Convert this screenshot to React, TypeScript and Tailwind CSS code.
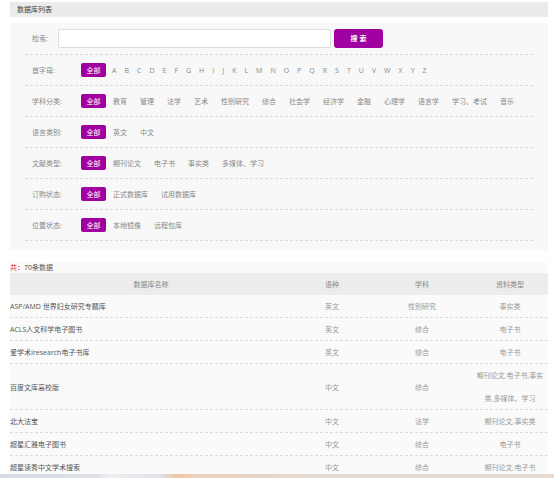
const letters = 'ABCDEFGHIJKLMNOPQRSTUVWXYZ'.split('');

const filters: { label: string; items: string[]; letters?: boolean }[] = [
  { label: '首字母:', items: letters, letters: true },
  {
    label: '学科分类:',
    items: ['教育', '管理', '法学', '艺术', '性别研究', '综合', '社会学', '经济学', '金融', '心理学', '语言学', '学习、考试', '音乐'],
  },
  { label: '语言类别:', items: ['英文', '中文'] },
  { label: '文献类型:', items: ['期刊论文', '电子书', '事实类', '多媒体、学习'] },
  { label: '订购状态:', items: ['正式数据库', '试用数据库'] },
  { label: '位置状态:', items: ['本地镜像', '远程包库'] },
];

const rows: { name: string; lang: string; subject: string; type: React.ReactNode; tall?: boolean }[] = [
  { name: 'ASP/AMD 世界妇女研究专题库', lang: '英文', subject: '性别研究', type: '事实类' },
  { name: 'ACLS人文科学电子图书', lang: '英文', subject: '综合', type: '电子书' },
  { name: '爱学术Iresearch电子书库', lang: '英文', subject: '综合', type: '电子书' },
  {
    name: '百度文库高校版',
    lang: '中文',
    subject: '综合',
    type: (
      <>
        期刊论文,电子书,事实
        <br />
        类,多媒体、学习
      </>
    ),
    tall: true,
  },
  { name: '北大法宝', lang: '中文', subject: '法学', type: '期刊论文,事实类' },
  { name: '超星汇雅电子图书', lang: '中文', subject: '综合', type: '电子书' },
  { name: '超星读秀中文学术搜索', lang: '中文', subject: '综合', type: '期刊论文,电子书' },
];

const font = { fontFamily: '"Open Sans", "Noto Sans CJK SC", sans-serif' };

function AllTag() {
  return (
    <span className="flex h-[14px] w-[25px] items-center justify-center rounded-[2px] bg-[#a0009f] text-white">
      全部
    </span>
  );
}

export default function App() {
  return (
    <div className="relative min-h-[478px] w-[554px] bg-white pt-[2px] text-[7px] leading-none" style={font}>
      <div className="mx-[10px] w-[538px]">
        <div className="flex h-[15px] items-center bg-[#ebebeb] pl-[7px] text-[#444]">数据库列表</div>

        <div className="mt-[6px] bg-[#f8f8f8] px-[15px] pb-[9px]">
          <div className="flex items-center border-b border-dashed border-[#dcdcdc] px-[7px] pt-[6px] pb-[6px]">
            <span className="w-[26px] text-[#888]">检索:</span>
            <div className="h-[19px] w-[273px] rounded-[2px] border border-[#dddddd] bg-white" />
            <button className="ml-[3px] flex h-[19px] w-[49px] items-center justify-center rounded-[3px] bg-[#a0009f] font-bold text-white">
              搜&nbsp;索
            </button>
          </div>

          {filters.map((f) => (
            <div
              key={f.label}
              className="flex h-[31px] items-center border-b border-dashed border-[#dcdcdc] px-[7px]"
            >
              <span className="w-[49px] text-[#888]">{f.label}</span>
              <AllTag />
              <div className={f.letters ? 'ml-[6px] flex gap-[8px] text-[#888]' : 'ml-[7px] flex gap-[13px] text-[#888]'}>
                {f.items.map((it) => (
                  <span key={it}>{it}</span>
                ))}
              </div>
            </div>
          ))}
        </div>

        <div className="mt-[12px] bg-[#fafafa]">
          <div className="flex h-[11px] items-center text-[#555]">
            <span className="text-[#e0201a]">共：</span>70条数据
          </div>
          <div className="grid h-[22px] grid-cols-[282px_80px_100px_76px] items-center bg-[#ececec] text-center text-[#888]">
            <span>数据库名称</span>
            <span>语种</span>
            <span>学科</span>
            <span>资料类型</span>
          </div>
          {rows.map((r) => (
            <div
              key={r.name}
              className={
                r.tall
                  ? 'grid h-[46px] grid-cols-[282px_80px_100px_76px] items-center border-b border-dashed border-[#dcdcdc] text-[#999]'
                  : 'grid h-[23px] grid-cols-[282px_80px_100px_76px] items-center border-b border-dashed border-[#dcdcdc] text-[#999]'
              }
            >
              <span className="text-[#555]">{r.name}</span>
              <span className="text-center">{r.lang}</span>
              <span className="text-center">{r.subject}</span>
              <span className="text-center leading-[23px]">{r.type}</span>
            </div>
          ))}
        </div>
      </div>
      <div className="fixed bottom-0 left-0 h-[4px] w-[554px] bg-[linear-gradient(90deg,#d6dbe1_0%,#dde1e6_17%,#eceff2_20%,#dfe2e6_29%,#f0c7a6_32%,#ecd3bf_36%,#e2dad4_60%,#e6dcd2_100%)]" />
    </div>
  );
}
